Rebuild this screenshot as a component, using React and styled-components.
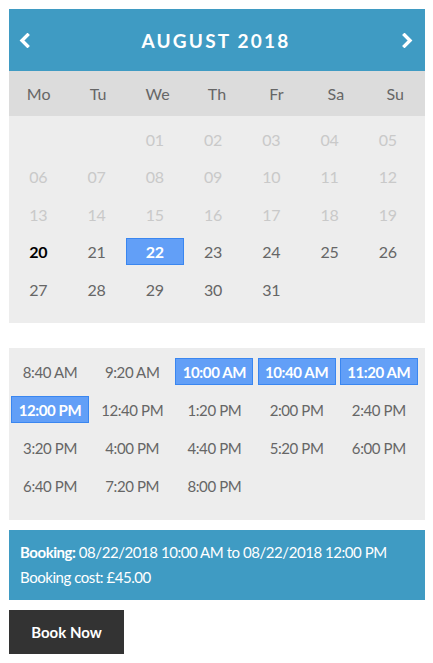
import React from "react";
import styled, { createGlobalStyle } from "styled-components";

const GlobalStyle = createGlobalStyle`
  html, body {
    margin: 0;
    padding: 0;
    background: #fff;
  }
  body {
    font-family: Lato, "Open Sans", "Liberation Sans", sans-serif;
    -webkit-font-smoothing: antialiased;
  }
`;

const Page = styled.div`
  width: 416px;
  padding: 9px;
`;

const Calendar = styled.div`
  background: #ededed;
`;

const Header = styled.div`
  height: 62px;
  background: #3f9bc3;
  color: #fff;
  display: flex;
  align-items: center;
  justify-content: space-between;
  padding: 0 12px 0 10px;
`;

const Arrow = styled.svg`
  width: 11px;
  height: 15px;
  display: block;
`;

const Title = styled.div`
  font-size: 19px;
  font-weight: 700;
  letter-spacing: 2.2px;
`;

const WeekRow = styled.div`
  height: 45px;
  background: #dcdcdc;
  display: grid;
  grid-template-columns: repeat(7, 1fr);
  align-items: center;
  text-align: center;
  color: #666;
  font-size: 16px;
`;

const DaysGrid = styled.div`
  width: 408px;
  padding: 9.5px 8px 20.5px 0;
  display: grid;
  grid-template-columns: repeat(7, 1fr);
  grid-auto-rows: 27px;
  row-gap: 10.5px;
`;

const Day = styled.div`
  display: flex;
  align-items: center;
  justify-content: center;
  font-size: 16px;
  letter-spacing: -0.3px;
  box-sizing: border-box;
  color: ${p => (p.$muted ? "#c9c9c9" : p.$today ? "#000" : "#666")};
  font-weight: ${p => (p.$today ? 700 : 400)};
  ${p =>
    p.$selected &&
    `
    background: #629ff7;
    border: 1px solid #3a86f0;
    color: #fff;
    font-weight: 700;
  `}
`;

const Times = styled.div`
  margin-top: 25px;
  background: #ededed;
  padding: 10px 7px 21px 2px;
  display: grid;
  grid-template-columns: repeat(5, 78px);
  column-gap: 4.2px;
  grid-auto-rows: 27px;
  row-gap: 11px;
`;

const Slot = styled.div`
  display: flex;
  align-items: center;
  justify-content: center;
  box-sizing: border-box;
  font-size: 15px;
  letter-spacing: -0.4px;
  color: ${p => (p.$selected ? "#fff" : "#666")};
  background: ${p => (p.$selected ? "#629ff7" : "transparent")};
  border: 1px solid ${p => (p.$selected ? "#3a86f0" : "transparent")};
  font-weight: ${p => (p.$selected ? 700 : 400)};
`;

const Summary = styled.div`
  margin-top: 10px;
  background: #3f9bc3;
  color: #fff;
  padding: 9.5px 11px;
  font-size: 15px;
  letter-spacing: -0.45px;
  line-height: 25.5px;
  b {
    font-weight: 700;
  }
`;

const BookButton = styled.button`
  margin-top: 10px;
  width: 115px;
  height: 44px;
  border: 0;
  background: #333;
  color: #fff;
  font-family: inherit;
  font-size: 15px;
  font-weight: 700;
  cursor: pointer;
`;

const weekdays = ["Mo", "Tu", "We", "Th", "Fr", "Sa", "Su"];
const times = [
  "8:40 AM", "9:20 AM", "10:00 AM", "10:40 AM", "11:20 AM",
  "12:00 PM", "12:40 PM", "1:20 PM", "2:00 PM", "2:40 PM",
  "3:20 PM", "4:00 PM", "4:40 PM", "5:20 PM", "6:00 PM",
  "6:40 PM", "7:20 PM", "8:00 PM",
];
const selectedTimes = ["10:00 AM", "10:40 AM", "11:20 AM", "12:00 PM"];

const Chevron = ({ dir }) => (
  <Arrow viewBox="0 0 11 15">
    <polyline
      points={dir === "left" ? "8.5,2 3,7.5 8.5,13" : "2.5,2 8,7.5 2.5,13"}
      fill="none"
      stroke="#fff"
      strokeWidth="3.4"
      strokeLinecap="square"
      strokeLinejoin="miter"
    />
  </Arrow>
);

export default function App() {
  // Aug 2018 starts on a Wednesday
  const cells = [null, null];
  for (let d = 1; d <= 31; d++) cells.push(d);

  return (
    <Page>
      <GlobalStyle />
      <Calendar>
        <Header>
          <Chevron dir="left" />
          <Title>AUGUST 2018</Title>
          <Chevron dir="right" />
        </Header>
        <WeekRow>
          {weekdays.map(w => (
            <div key={w}>{w}</div>
          ))}
        </WeekRow>
        <DaysGrid>
          {cells.map((d, i) =>
            d === null ? (
              <div key={"e" + i} />
            ) : (
              <Day
                key={d}
                $muted={d < 20}
                $today={d === 20}
                $selected={d === 22}
              >
                {String(d).padStart(2, "0")}
              </Day>
            )
          )}
        </DaysGrid>
      </Calendar>
      <Times>
        {times.map(t => (
          <Slot key={t} $selected={selectedTimes.includes(t)}>
            {t}
          </Slot>
        ))}
      </Times>
      <Summary>
        <div>
          <b>Booking:</b> 08/22/2018 10:00 AM to 08/22/2018 12:00 PM
        </div>
        <div>Booking cost: £45.00</div>
      </Summary>
      <BookButton>Book Now</BookButton>
    </Page>
  );
}
